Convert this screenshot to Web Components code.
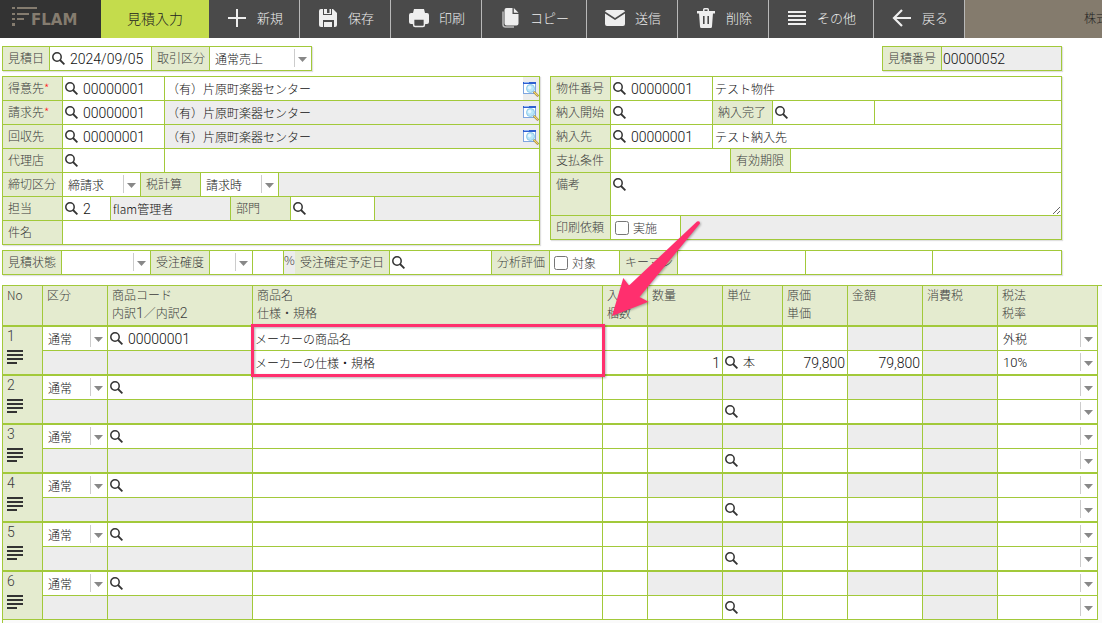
<!DOCTYPE html>
<html lang="ja">
<head>
<meta charset="utf-8">
<meta name="viewport" content="width=device-width, initial-scale=1">
<title>見積入力</title>
<style>
  html, body { margin: 0; }
  body {
    --line: #a2c93a;
    --label: #e4ebcf;
    --off: #ededed;
    --ink: #111;
    --dim: #3c3c3c;
    --digits: 300 14px/18px Roboto, "Noto Sans CJK JP", sans-serif;
    font: 300 12px/18px "Noto Sans CJK JP", "Noto Sans", sans-serif;
    color: var(--ink);
    background: #fff;
  }
</style>
</head>
<body>
<estimate-app></estimate-app>

<script>
const RESET = `
  * { box-sizing: border-box; }
  input, select, textarea, button {
    font: inherit; color: inherit; margin: 0; border: 0; padding: 0;
    background: transparent; border-radius: 0; outline: none; min-width: 0;
  }
  button { cursor: pointer; }
`;

const SELECT_CSS = `
  select {
    appearance: none; width: 100%; height: 23px; padding: 0 18px 0 5px;
    background: url("data:image/svg+xml,%3Csvg xmlns='http://www.w3.org/2000/svg' width='17' height='23'%3E%3Cpath d='M0 2h1v18H0z' fill='%23ccc'/%3E%3Cpath d='M4 10h9l-4.500 5z' fill='%23888'/%3E%3C/svg%3E") no-repeat right center #fff;
  }
`;

const LOOKUP_CSS = `
  .code { display: flex; height: 23px; background: #fff; }
  .code button { flex: none; width: 18px; height: 23px; padding: 0 0 0 2px; display: flex; align-items: center; }
  .code input { flex: 1; width: 0; padding-left: 2px; }
`;

function define(name, html, init) {
  const template = document.createElement('template');
  template.innerHTML = html;
  customElements.define(name, class extends HTMLElement {
    constructor() {
      super();
      this.attachShadow({ mode: 'open' });
    }
    connectedCallback() {
      if (this.shadowRoot.childNodes.length) return;
      this.shadowRoot.append(template.content.cloneNode(true));
      if (init) init.call(this, this.shadowRoot, n => this.getAttribute(n) || '');
    }
  });
}

/* ---- icons ---- */
define('search-icon', `
  <style>:host { display: block; width: 13px; height: 13px; } svg { display: block; }</style>
  <svg width="13" height="13" viewBox="0 0 13 13" fill="none" stroke="#333">
    <circle cx="5" cy="5" r="4.200" stroke-width="1.500"/><path d="M8 8 12.400 12.400" stroke-width="1.800"/>
  </svg>`);

define('popup-icon', `
  <style>:host { display: block; width: 16px; height: 16px; } svg { display: block; }</style>
  <svg width="16" height="16" viewBox="0 0 16 16">
    <rect x=".5" y="1.500" width="12" height="11" fill="#fff" stroke="#7fa6e0"/>
    <path d="M0 1h13v2H0z" fill="#2f5fd0"/><path d="M1 1h5v1H1z" fill="#8fb6f4"/>
    <circle cx="7.500" cy="7.500" r="4" fill="#b9e6fa" stroke="#8cc8e8"/>
    <circle cx="6.600" cy="6.600" r="1.800" fill="#e6f8ff"/>
    <path d="M11.500 11.500 14.500 14.500" stroke="#8a6a20" stroke-width="2.400" stroke-linecap="round"/>
    <path d="M11.500 11.500 14.300 14.300" stroke="#f2d670" stroke-width="1.400" stroke-linecap="round"/>
  </svg>`);

const NAV_ICONS = {
  plus: '<path d="M10 1v18M1 10h18" stroke="#eee" stroke-width="2"/>',
  save: '<path fill-rule="evenodd" d="M1 3a2 2 0 0 1 2-2h12l4 4v12a2 2 0 0 1-2 2h-1v-7H5v7H3a2 2 0 0 1-2-2zM5 1v6h9V1z"/><path d="M6 1h3v5H6zM11.500 1H13v5h-4V5h2.500zM6 14h8v5H6z"/>',
  print: '<path d="M5 1h10l1 4H4z"/><path fill-rule="evenodd" d="M2 5h16a2 2 0 0 1 2 2v7a2 2 0 0 1-2 2h-2v-5H4v5H2a2 2 0 0 1-2-2V7a2 2 0 0 1 2-2z"/><path d="M4.600 11h10.800v6a1.500 1.500 0 0 1-1.500 1.500H6.100A1.500 1.500 0 0 1 4.600 17z" fill="#4a4a4a" stroke="#eee" stroke-width="1.500"/>',
  copy: '<path d="M3 3.500v13a2.500 2.500 0 0 0 2.500 2.500H14" fill="none" stroke="#bbb" stroke-width="1.500"/><path d="M6.500 0h6v6h6v9.500a2 2 0 0 1-2 2h-10a2 2 0 0 1-2-2V2a2 2 0 0 1 2-2z"/><path d="M13.800 0 18.500 4.800h-4.700z"/>',
  mail: '<path d="M2 2h16a2 2 0 0 1 2 1.500L10 10 0 3.500A2 2 0 0 1 2 2z"/><path d="M0 5.500 10 12l10-6.500V16a2 2 0 0 1-2 2H2a2 2 0 0 1-2-2z"/>',
  trash: '<path d="M7 3V1.500A1.500 1.500 0 0 1 8.500 0h3A1.500 1.500 0 0 1 13 1.500V3h6v2.500H1V3zM8.500 3h3V1.500h-3z" fill-rule="evenodd"/><path fill-rule="evenodd" d="M3 5h14l-1 13.500a1.500 1.500 0 0 1-1.500 1.500h-9A1.500 1.500 0 0 1 4 18.500zM7 8v8h1.600V8zM11.400 8v8H13V8z"/>',
  list: '<path d="M1 3h18v2H1zM1 7h18v2H1zM1 11h18v2H1zM1 15h18v2H1z"/>',
  back: '<path d="M19 10H3M10 2 2 10l8 8" fill="none" stroke="#eee" stroke-width="2.200"/>'
};

/* ---- header ---- */
define('nav-button', `
  <style>${RESET}
    :host { display: block; flex: none; }
    button {
      display: flex; align-items: center; gap: 10px; height: 38px; padding: 0 16px 2px 18px;
      border-right: 1px solid #b8b8b8; font-size: 13px; color: #eee; white-space: nowrap;
    }
    svg { display: block; width: 20px; height: 20px; fill: #eee; }
    :host([wide]) span { min-width: 40px; text-align: left; }
  </style>
  <button type="button"><svg viewBox="0 0 20 20" aria-hidden="true"></svg><span><slot></slot></span></button>`,
  function (root, attr) { root.querySelector('svg').innerHTML = NAV_ICONS[attr('icon')]; });

define('app-header', `
  <style>${RESET}
    :host { display: flex; height: 38px; background: #4a4a4a; overflow: hidden; }
    .logo { flex: none; width: 101px; background: #333; display: flex; padding: 7px 0 0 12px; color: #857c6f; }
    .logo svg { flex: none; width: 26px; height: 20px; fill: currentColor; margin-right: -7px; }
    .logo b { font: 700 15px/15px "DejaVu Sans", sans-serif; padding-top: 6px; }
    h1 { flex: none; width: 108px; margin: 0; background: #c4dc4c; color: #222; font-weight: 300; font-size: 14px; line-height: 36px; text-align: center; }
    .user { flex: 1; min-width: 0; padding-left: 119px; background: #847b6d; color: #222; line-height: 36px; white-space: nowrap; overflow: hidden; }
  </style>
  <div class="logo">
    <svg viewBox="0 0 26 20" aria-hidden="true"><path d="M0 0h3v2H0zM0 6h3v2H0zM0 11h3v2H0zM0 16h3v3H0zM5 0h20v2H5zM5 6h12v2H5zM5 11h7v2H5z"/></svg>
    <b>FLAM</b>
  </div>
  <h1>見積入力</h1>
  <slot></slot>
  <div class="user">株式</div>`);

/* ---- form building blocks ---- */
const FIELD_CSS = `${RESET}
  :host { display: flex; gap: 1px; flex: none; min-height: 23px; }
  :host([grow]) { flex: 1; min-width: 0; }
  label.cap { flex: none; width: var(--label-w, 59px); padding: 2px 0 0 5px; line-height: 18px; background: var(--label); color: var(--dim); white-space: nowrap; }
  label.cap[hidden] { display: none; }
  label.cap sup { font-size: 12px; line-height: 0; color: #f22; vertical-align: 0; }
  .big { font: var(--digits); }
`;

function caption(root, attr) {
  const cap = root.querySelector('.cap');
  if (!attr('label')) { cap.hidden = true; return; }
  cap.textContent = attr('label');
  if (attr('required')) {
    const s = document.createElement('sup');
    s.textContent = '*';
    cap.append(s);
  }
}

define('form-panel', `
  <style>
    :host { display: grid; gap: 1px; background: var(--line); border: 1px solid var(--line); box-shadow: 1px 1px 1px rgba(0,0,0,.12); }
  </style><slot></slot>`);

define('form-row', `<style>:host { display: flex; gap: 1px; min-width: 0; }</style><slot></slot>`);

define('blank-cell', `<style>:host { display: block; flex: 1; background: var(--off); }</style>`);

define('unit-label', `<style>:host { display: block; flex: none; width: 11px; margin-right: -1px; background: var(--off); color: var(--dim); line-height: 18px; overflow: hidden; }</style><slot></slot>`);

define('lookup-field', `
  <style>${FIELD_CSS}${LOOKUP_CSS}
    .code { flex: none; width: var(--code-w, 101px); }
    .name { flex: 1; display: flex; min-width: 0; background: #fff; }
    .name input { flex: 1; width: 0; padding: 0 2px; }
    .name.off { background: var(--off); }
    .name.none { display: none; }
    .name button { flex: none; width: 16px; background: var(--off); display: flex; align-items: center; }
    .name button[hidden] { display: none; }
  </style>
  <label class="cap" for="code"></label>
  <div class="code big"><button type="button" aria-label="検索"><search-icon></search-icon></button><input id="code"></div>
  <div class="name"><input id="name" aria-label="名称"><button type="button" aria-label="詳細"><popup-icon></popup-icon></button></div>`,
  function (root, attr) {
    caption(root, attr);
    root.getElementById('code').value = attr('code');
    const name = root.querySelector('.name');
    name.firstElementChild.value = attr('name');
    name.lastElementChild.hidden = !this.hasAttribute('popup');
    if (this.hasAttribute('off')) { name.classList.add('off'); name.firstElementChild.readOnly = true; }
    if (this.hasAttribute('code-only')) name.classList.add('none');
  });

define('text-field', `
  <style>${FIELD_CSS}
    input { width: var(--field-w, 100%); padding: 0 1px; height: 23px; background: #fff; font: var(--digits); }
    :host([grow]) input { flex: 1; }
    :host([off]) input { background: var(--off); }
  </style>
  <label class="cap" for="f"></label><input id="f">`,
  function (root, attr) {
    caption(root, attr);
    const f = root.getElementById('f');
    f.value = attr('value');
    f.readOnly = this.hasAttribute('off');
    if (!attr('label')) f.setAttribute('aria-label', attr('hint'));
  });

define('note-field', `
  <style>${FIELD_CSS}${LOOKUP_CSS}
    .code { flex: 1; height: 42px; }
    textarea { flex: 1; width: 0; height: 42px; padding: 2px; resize: both; display: block; }
  </style>
  <label class="cap" for="f"></label>
  <div class="code"><button type="button" aria-label="検索"><search-icon></search-icon></button><textarea id="f"></textarea></div>`,
  caption);

define('select-field', `
  <style>${FIELD_CSS}${SELECT_CSS}
    select { width: var(--field-w, 77px); }
  </style>
  <label class="cap" for="f"></label><select id="f"><option></option></select>`,
  function (root, attr) {
    caption(root, attr);
    root.querySelector('option').textContent = attr('value');
  });

define('check-field', `
  <style>${FIELD_CSS}
    .box { display: flex; align-items: center; gap: 4px; width: 69px; padding-left: 4px; background: #fff; color: #333; }
    .box input { width: 14px; height: 14px; }
  </style>
  <label class="cap" for="f"></label>
  <label class="box"><input type="checkbox" id="f"><span><slot></slot></span></label>`,
  caption);

/* ---- detail lines ---- */
define('detail-table', `
  <style>${RESET}${SELECT_CSS}${LOOKUP_CSS}
    :host { display: block; border: solid var(--line); border-width: 1px 0 0 1px; padding-right: 4px; background: #fafafa; }
    table { width: 100%; table-layout: fixed; border-collapse: separate; border-spacing: 0; background: #fff; }
    th { font-weight: 300; text-align: left; vertical-align: top; color: var(--dim); background: var(--label); padding: 0 0 0 4px; line-height: 18px; white-space: nowrap; }
    thead th { height: 41px; border-bottom: 2px solid var(--line); }
    thead th div { height: 18px; }
    thead th i { font: var(--digits); }
    th, td { border-right: 1px solid var(--line); }
    td { padding: 0; height: 24px; border-bottom: 1px solid var(--line); line-height: 0; }
    .b td, tbody th { border-bottom: 2px solid var(--line); }
    .b td { height: 25px; }
    tbody:last-child .b td, tbody:last-child th { border-bottom-width: 1px; }
    tbody:last-child .b td { height: 24px; }
    td.off { background: var(--off); }
    td > input { display: block; width: 100%; height: 23px; padding: 0 2px; line-height: 18px; }
    td > input.num { text-align: right; font: var(--digits); }
    .code input { font: var(--digits); }
    .code.unit input { font-size: 12px; }
    select { display: block; line-height: 18px; }
    select.rate { font: var(--digits); font-size: 13px; }
    tbody th span { display: block; font: var(--digits); }
    tbody th button { display: block; margin-top: 5px; }
    tbody th svg { display: block; }
  </style>
  <table>
    <colgroup>
      <col style="width:40px"><col style="width:65px"><col style="width:145px"><col><col style="width:45px"><col style="width:75px">
      <col style="width:60px"><col style="width:65px"><col style="width:75px"><col style="width:75px"><col style="width:100px">
    </colgroup>
    <thead><tr>
      <th>No</th><th>区分</th><th><div>商品コード</div><div>内訳<i>1</i>／内訳<i>2</i></div></th><th>商品名<br>仕様・規格</th><th>入数<br>梱数</th><th>数量</th>
      <th>単位</th><th>原価<br>単価</th><th>金額</th><th>消費税</th><th>税法<br>税率</th>
    </tr></thead>
  </table>`,
  function (root) {
    const lines = [{ code: '00000001', name: 'メーカーの商品名', spec: 'メーカーの仕様・規格', qty: '1', unit: '本', price: '79,800', sum: '79,800', tax: '外税', rate: '10%' }, {}, {}, {}, {}, {}];
    const lookup = (v, hint, cls) => `<div class="code ${cls}"><button type="button" aria-label="検索"><search-icon></search-icon></button><input aria-label="${hint}" value="${v || ''}"></div>`;
    const text = (v, hint, cls) => `<input class="${cls || ''}" aria-label="${hint}" value="${v || ''}">`;
    const pick = (v, hint, cls) => `<select class="${cls || ''}" aria-label="${hint}"><option>${v || ''}</option></select>`;
    const table = root.querySelector('table');
    lines.forEach((l, i) => {
      const body = document.createElement('tbody');
      body.innerHTML = `
        <tr>
          <th rowspan="2"><span>${i + 1}</span><button type="button" aria-label="行メニュー"><svg width="16" height="14" viewBox="0 0 16 14" fill="#333"><path d="M0 0h16v2H0zM0 4h16v2H0zM0 8h16v2H0zM0 12h10v2H0z"/></svg></button></th>
          <td>${pick('通常', '区分')}</td><td>${lookup(l.code, '商品コード', '')}</td><td>${text(l.name, '商品名')}</td><td>${text('', '入数')}</td>
          <td class="off"></td><td class="off"></td><td>${text('', '原価', 'num')}</td><td class="off"></td><td class="off"></td><td>${pick(l.tax, '税法')}</td>
        </tr>
        <tr class="b">
          <td class="off"></td><td class="off"></td><td>${text(l.spec, '仕様・規格')}</td><td>${text('', '梱数')}</td>
          <td>${text(l.qty, '数量', 'num')}</td><td>${lookup(l.unit, '単位', 'unit')}</td><td>${text(l.price, '単価', 'num')}</td>
          <td>${text(l.sum, '金額', 'num')}</td><td class="off"></td><td>${pick(l.rate, '税率', 'rate')}</td>
        </tr>`;
      table.append(body);
    });
  });

/* ---- call-out drawn over the form: frame and arrow ---- */
define('callout-mark', `
  <style>
    :host { position: absolute; left: 245px; top: 215px; width: 465px; height: 170px; pointer-events: none; }
    svg { display: block; filter: drop-shadow(1px 1px 1px rgba(0,0,0,.3)); }
  </style>
  <svg width="465" height="170" viewBox="245 215 465 170" aria-hidden="true">
    <rect x="252.500" y="325.500" width="351" height="50" fill="none" stroke="#ff2f6e" stroke-width="3"/>
    <path d="M612 316 623.300 278 629 285.500 697 221.500Q700 220.500 700 223.500L639.500 297 648.500 301.700Z" fill="#ff2f6e"/>
  </svg>`);

define('estimate-app', `
  <style>
    :host { display: flex; flex-direction: column; min-height: 100vh; position: relative; overflow: hidden; }
    main { flex: 1; display: flex; flex-direction: column; padding: 8px 0 0 2px; }
    .top, .cols, .status { margin: 0 40px 5px 0; }
    .top { display: flex; justify-content: space-between; }
    .cols { display: grid; grid-template-columns: 538fr 512fr; gap: 10px; align-items: start; }
    .status { margin-bottom: 10px; }
    detail-table { flex: 1; }
  </style>
  <app-header>
    <nav-button icon="plus">新規</nav-button>
    <nav-button icon="save">保存</nav-button>
    <nav-button icon="print">印刷</nav-button>
    <nav-button icon="copy" wide>コピー</nav-button>
    <nav-button icon="mail">送信</nav-button>
    <nav-button icon="trash">削除</nav-button>
    <nav-button icon="list" wide>その他</nav-button>
    <nav-button icon="back">戻る</nav-button>
  </app-header>
  <main>
    <div class="top">
      <form-panel><form-row>
        <lookup-field label="見積日" code="2024/09/05" code-only style="--label-w:46px"></lookup-field>
        <select-field label="取引区分" value="通常売上" style="--label-w:57px;--field-w:101px"></select-field>
      </form-row></form-panel>
      <form-panel><form-row>
        <text-field label="見積番号" value="00000052" off style="--label-w:58px;--field-w:119px"></text-field>
      </form-row></form-panel>
    </div>
    <div class="cols">
      <form-panel>
        <form-row><lookup-field grow label="得意先" required="required" code="00000001" name="（有）片原町楽器センター" popup></lookup-field></form-row>
        <form-row><lookup-field grow label="請求先" required="required" code="00000001" name="（有）片原町楽器センター" off popup></lookup-field></form-row>
        <form-row><lookup-field grow label="回収先" code="00000001" name="（有）片原町楽器センター" off popup></lookup-field></form-row>
        <form-row><lookup-field grow label="代理店"></lookup-field></form-row>
        <form-row>
          <select-field label="締切区分" value="締請求"></select-field>
          <select-field label="税計算" value="請求時"></select-field>
          <blank-cell></blank-cell>
        </form-row>
        <form-row>
          <lookup-field label="担当" code="2" name="flam管理者" off style="--code-w:47px;width:227px"></lookup-field>
          <lookup-field grow label="部門" off style="--code-w:83px"></lookup-field>
        </form-row>
        <form-row><text-field grow label="件名"></text-field></form-row>
      </form-panel>
      <form-panel>
        <form-row><lookup-field grow label="物件番号" code="00000001" name="テスト物件"></lookup-field></form-row>
        <form-row>
          <lookup-field label="納入開始" code-only></lookup-field>
          <lookup-field grow label="納入完了"></lookup-field>
        </form-row>
        <form-row><lookup-field grow label="納入先" code="00000001" name="テスト納入先"></lookup-field></form-row>
        <form-row>
          <text-field label="支払条件" style="--field-w:119px"></text-field>
          <text-field grow label="有効期限"></text-field>
        </form-row>
        <form-row><note-field grow label="備考"></note-field></form-row>
        <form-row><check-field label="印刷依頼">実施</check-field><blank-cell></blank-cell></form-row>
      </form-panel>
    </div>
    <form-panel class="status"><form-row>
      <select-field label="見積状態" style="--label-w:58px;--field-w:88px"></select-field>
      <select-field label="受注確度" style="--label-w:58px;--field-w:42px"></select-field>
      <text-field hint="確度（％）" style="--field-w:30px"></text-field>
      <unit-label>%</unit-label>
      <lookup-field label="受注確定予定日" code-only style="--label-w:94px"></lookup-field>
      <check-field label="分析評価" style="--label-w:57px">対象</check-field>
      <text-field grow label="キーマン" style="--label-w:57px;flex:185"></text-field>
      <text-field grow hint="キーマン2" style="flex:126"></text-field>
      <text-field grow hint="キーマン3" style="flex:128"></text-field>
    </form-row></form-panel>
    <detail-table></detail-table>
  </main>
  <callout-mark></callout-mark>`);
</script>
</body>
</html>
